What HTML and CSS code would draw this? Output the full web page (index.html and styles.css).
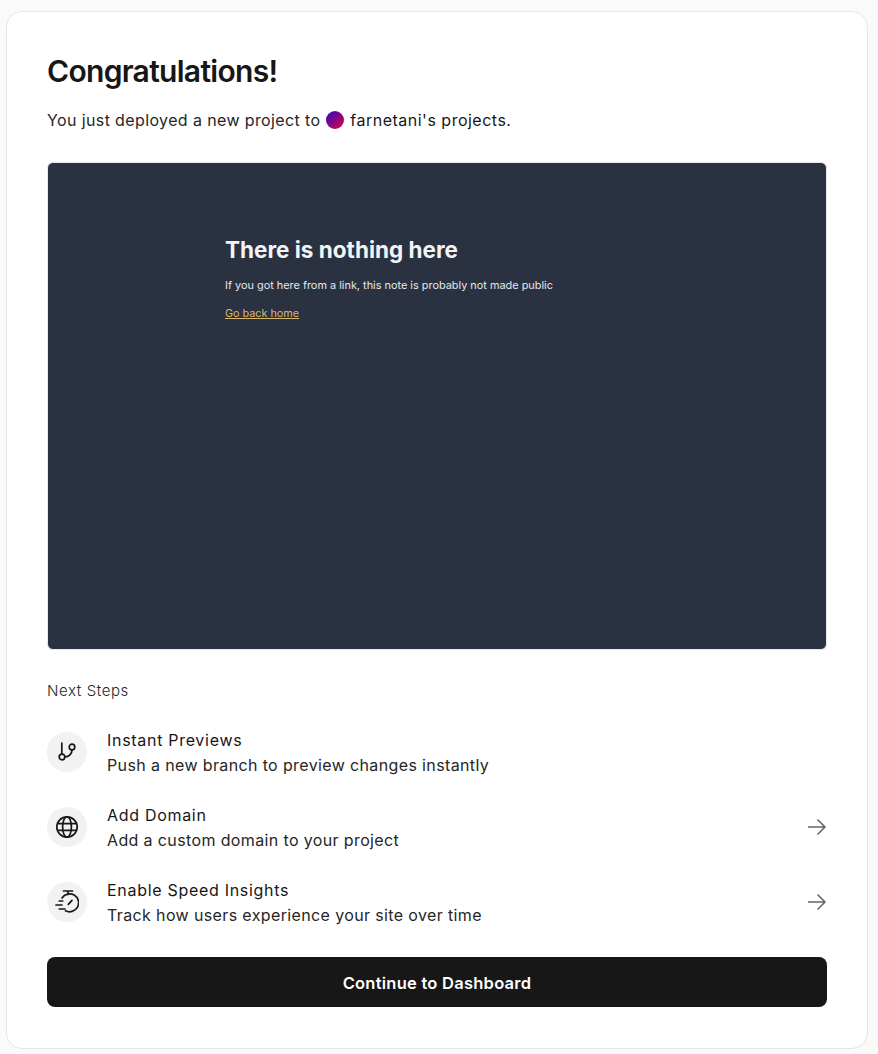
FILE: index.html
```html
<!DOCTYPE html>
<html lang="en">
<head>
  <meta charset="UTF-8" />
  <meta name="viewport" content="width=device-width, initial-scale=1" />
  <title>Congratulations!</title>
  <link rel="stylesheet" href="styles.css">
</head>
<body>
  <main class="card">
    <h1>Congratulations!</h1>
    <p class="lead">You just deployed a new project to <span class="avatar"></span> <span class="team">farnetani's projects</span>.</p>

    <div class="preview">
      <h2>There is nothing here</h2>
      <p>If you got here from a link, this note is probably not made public</p>
      <a href="#">Go back home</a>
    </div>

    <div class="steps-title">Next Steps</div>

    <div class="steps">
      <div class="step">
        <div class="step-icon">
          <svg width="20" height="20" viewBox="0 0 20 20" fill="none" stroke="#171717" stroke-width="1.700" stroke-linecap="round">
            <circle cx="5" cy="15" r="2.800"/>
            <circle cx="15" cy="5" r="2.800"/>
            <path d="M4.800 1v11.200"/>
            <path d="M15 7.800c0 4.200-3 7.200-7.200 7.200"/>
          </svg>
        </div>
        <div class="step-text">
          <div class="step-name">Instant Previews</div>
          <div class="step-desc">Push a new branch to preview changes instantly</div>
        </div>
      </div>

      <div class="step">
        <div class="step-icon">
          <svg width="24" height="24" viewBox="0 0 24 24" fill="none" stroke="#171717" stroke-width="1.700">
            <circle cx="12" cy="12" r="10.200"/>
            <ellipse cx="12" cy="12" rx="4.400" ry="10.200"/>
            <path d="M2.600 8.600h18.800M2.600 15.400h18.800"/>
          </svg>
        </div>
        <div class="step-text">
          <div class="step-name">Add Domain</div>
          <div class="step-desc">Add a custom domain to your project</div>
        </div>
        <svg class="arrow" width="20" height="18" viewBox="0 0 20 18" fill="none" stroke="#666" stroke-width="1.500">
          <path d="M1 9h17M10.500 1.500 18 9l-7.500 7.500"/>
        </svg>
      </div>

      <div class="step">
        <div class="step-icon">
          <svg width="24" height="24" viewBox="0 0 24 24" fill="none" stroke="#171717" stroke-width="1.700" stroke-linecap="round">
            <path d="M7 8A9 9 0 1 1 10.500 20.800"/>
            <path d="M8.500 1h9M13 1v3.500"/>
            <path d="M13.300 14.300l3.700-4"/>
            <path d="M4.300 11h3.400M1 15h6M4.300 19h5.700"/>
          </svg>
        </div>
        <div class="step-text">
          <div class="step-name">Enable Speed Insights</div>
          <div class="step-desc">Track how users experience your site over time</div>
        </div>
        <svg class="arrow" width="20" height="18" viewBox="0 0 20 18" fill="none" stroke="#666" stroke-width="1.500">
          <path d="M1 9h17M10.500 1.500 18 9l-7.500 7.500"/>
        </svg>
      </div>
    </div>

    <button class="continue">Continue to Dashboard</button>
  </main>
</body>
</html>
```

FILE: styles.css
```css
body {
  margin: 0;
  padding: 11px 10px 5px 6px;
  background-color: #fafafa;
  color: #171717;
  font-family: Inter, "Liberation Sans", sans-serif;
}
.card {
  box-sizing: border-box;
  height: 1038px;
  padding: 39px 40px 40px;
  background-color: #fff;
  border: 1px solid #e6e6e6;
  border-radius: 16px;
}
h1 {
  margin: 0;
  font-size: 30px;
  line-height: 40px;
  font-weight: 600;
  letter-spacing: -0.7px;
}
.lead {
  margin: 17px 0 0;
  font-size: 16px;
  line-height: 24px;
  color: #262626;
  letter-spacing: 0.38px;
}
.avatar {
  display: inline-block;
  width: 18px;
  height: 18px;
  margin: 0 1px;
  border-radius: 50%;
  background: linear-gradient(135deg, #2a07c9, #e0063a);
  vertical-align: -3px;
}
.team {
  color: #171717;
  letter-spacing: 0.5px;
}
.preview {
  box-sizing: border-box;
  height: 488px;
  margin-top: 30px;
  padding: 73px 177px 0;
  background-color: #2a3140;
  border: 1px solid #e6e8ee;
  border-radius: 6px;
  color: #e5e7eb;
}
.preview h2 {
  margin: 0;
  font-size: 22.500px;
  line-height: 28px;
  font-weight: 700;
  color: #f3f4f6;
}
.preview p {
  margin: 13px 0 0;
  font-size: 10.900px;
  line-height: 16px;
}
.preview a {
  display: inline-block;
  margin-top: 13px;
  font-size: 10.800px;
  line-height: 16px;
  color: #d9b96e;
}
.steps-title {
  margin-top: 31px;
  font-size: 15px;
  line-height: 20px;
  font-weight: 300;
  letter-spacing: 0.6px;
  color: #262626;
}
.steps {
  margin-top: 13px;
}
.step {
  display: flex;
  align-items: center;
  gap: 20px;
  height: 75px;
}
.step-icon {
  flex: none;
  display: flex;
  align-items: center;
  justify-content: center;
  width: 40px;
  height: 40px;
  border-radius: 50%;
  background-color: #f2f2f2;
}
.step-text {
  flex: 1;
  padding-top: 2px;
}
.step-name {
  font-size: 16px;
  line-height: 25px;
  letter-spacing: 0.7px;
}
.step-desc {
  font-size: 16px;
  line-height: 25px;
  color: #262626;
  letter-spacing: 0.37px;
}
.continue {
  display: block;
  width: 100%;
  height: 50px;
  margin-top: 18px;
  padding-top: 2px;
  border: none;
  border-radius: 8px;
  background-color: #171717;
  color: #fff;
  font-family: inherit;
  font-size: 16.500px;
  font-weight: 600;
  letter-spacing: 0.25px;
  cursor: pointer;
}
```
